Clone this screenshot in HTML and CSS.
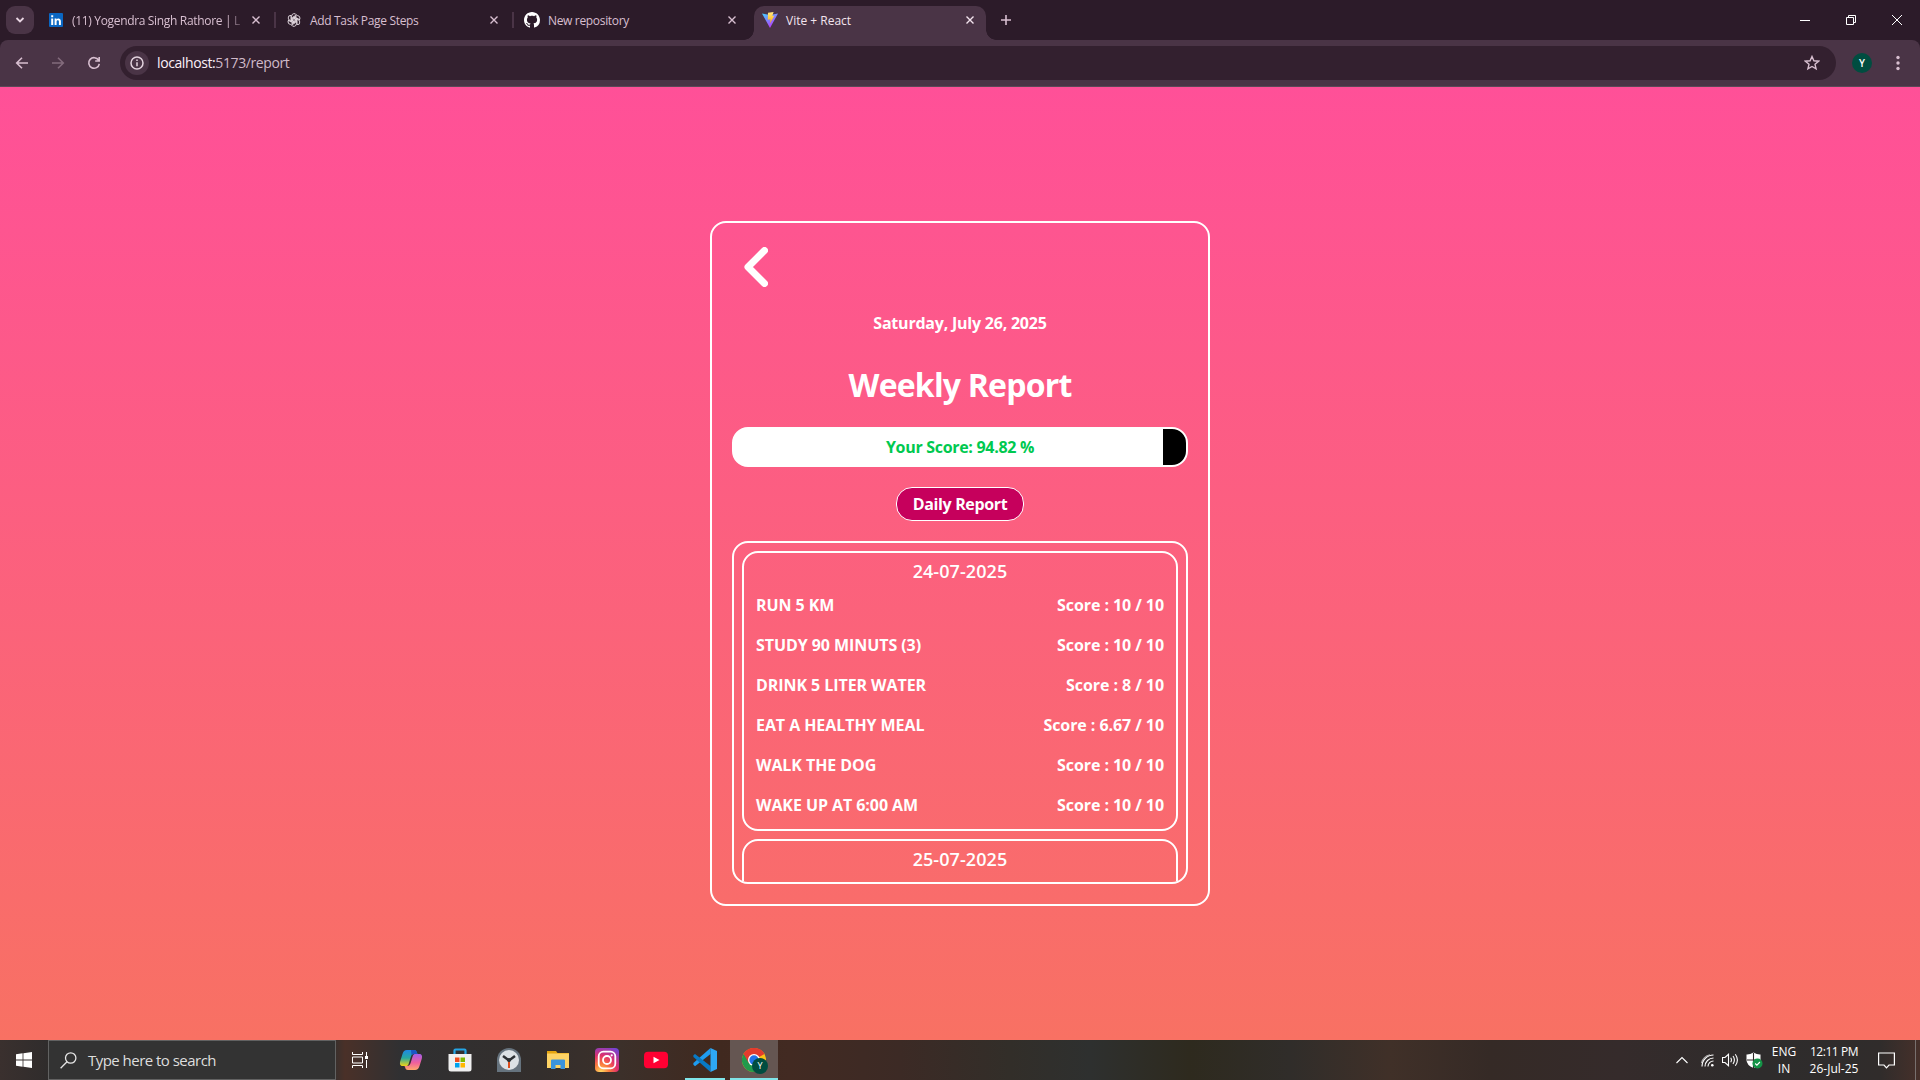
FILE: index.html
```html
<!DOCTYPE html>
<html lang="en">
<head>
<meta charset="utf-8">
<title>Vite + React</title>
<link rel="stylesheet" href="styles.css">
</head>
<body>
<div class="browser">
  <header class="tabstrip">
    <button class="tab-search"><svg width="10" height="8" viewBox="0 0 10 8"><path d="M1.500 2 5 5.500 8.500 2" fill="none" stroke="#e8d5e2" stroke-width="1.800"/></svg></button>
    <div class="tab first">
      <svg class="fav" viewBox="0 0 16 16"><rect x="1" y="1" width="14" height="14" rx="1" fill="#0a66c2"/><path d="M3.200 6.500h2V13h-2zM3.200 3.200h2v2h-2zM6.600 6.500h1.900v1c.9-1.700 4.400-1.700 4.400 1.700V13h-2V9.600c0-2-2.300-1.800-2.300 0V13h-2z" fill="#fff"/></svg>
      <span class="tab-title fade">(11) Yogendra Singh Rathore | L</span>
      <svg class="x" viewBox="0 0 10 10"><path d="M1.500 1.500l7 7M8.500 1.500l-7 7"/></svg>
    </div>
    <div class="tab">
      <svg class="fav" viewBox="0 0 16 16"><g fill="none" stroke="#e6dce3" stroke-width=".9"><path id="petal" d="M5.600 9.400V4.200a2.600 2.600 0 0 1 4.900-1.200L6.800 5.200v4"/><use href="#petal" transform="rotate(60 8 8)"/><use href="#petal" transform="rotate(120 8 8)"/><use href="#petal" transform="rotate(180 8 8)"/><use href="#petal" transform="rotate(240 8 8)"/><use href="#petal" transform="rotate(300 8 8)"/></g></svg>
      <span class="tab-title">Add Task Page Steps</span>
      <svg class="x" viewBox="0 0 10 10"><path d="M1.500 1.500l7 7M8.500 1.500l-7 7"/></svg>
    </div>
    <div class="tab">
      <svg class="fav" viewBox="0 0 16 16"><path fill="#fff" d="M8 0C3.580 0 0 3.580 0 8c0 3.540 2.290 6.530 5.470 7.590.4.070.55-.17.55-.38 0-.19-.01-.82-.01-1.490-2.010.37-2.530-.49-2.690-.94-.09-.23-.48-.94-.82-1.130-.28-.15-.68-.52-.01-.53.63-.01 1.080.58 1.230.82.72 1.210 1.870.87 2.330.66.070-.52.28-.87.51-1.070-1.780-.2-3.640-.89-3.640-3.950 0-.87.31-1.590.82-2.150-.08-.2-.36-1.020.08-2.120 0 0 .67-.21 2.200.82.64-.18 1.320-.27 2-.27s1.360.09 2 .27c1.530-1.040 2.200-.82 2.200-.82.44 1.100.16 1.920.08 2.120.51.56.82 1.270.82 2.150 0 3.070-1.870 3.750-3.650 3.950.29.25.54.73.54 1.480 0 1.070-.01 1.930-.01 2.200 0 .21.15.46.55.38A8 8 0 0 0 16 8c0-4.420-3.580-8-8-8z"/></svg>
      <span class="tab-title">New repository</span>
      <svg class="x" viewBox="0 0 10 10"><path d="M1.500 1.500l7 7M8.500 1.500l-7 7"/></svg>
    </div>
    <div class="tab active">
      <svg class="fav" viewBox="0 0 16 16"><defs><linearGradient id="va" x2=".6" y2="1"><stop stop-color="#41d1ff"/><stop offset="1" stop-color="#bd34fe"/></linearGradient><linearGradient id="vb" x2="0" y2="1"><stop stop-color="#ffea83"/><stop offset="1" stop-color="#ffa800"/></linearGradient></defs><path d="M0 1.600 8 3l8-1.400L8 16z" fill="url(#va)"/><path d="M6 .8 11.600 0 10.300 4l2-.3L8 11.500l.5-4.300-2.700.5z" fill="url(#vb)"/></svg>
      <span class="tab-title">Vite + React</span>
      <svg class="x" viewBox="0 0 10 10"><path d="M1.500 1.500l7 7M8.500 1.500l-7 7"/></svg>
    </div>
    <svg class="plus" viewBox="0 0 10 10"><path d="M5 0v10M0 5h10"/></svg>
    <div class="winctl">
      <svg viewBox="0 0 10 10"><path d="M0 5.500h10"/></svg>
      <svg viewBox="0 0 10 10"><path d="M.5 2.500h7v7h-7zM2.500 2.500v-2h7v7h-2"/></svg>
      <svg viewBox="0 0 10 10"><path d="M0 0l10 10M10 0 0 10"/></svg>
    </div>
  </header>
  <div class="toolbar">
    <svg class="nav" viewBox="0 0 16 16"><path d="M14 8H3M8 2.700 2.700 8 8 13.300"/></svg>
    <svg class="nav off" viewBox="0 0 16 16"><path d="M2 8h11M8 2.700 13.300 8 8 13.300"/></svg>
    <svg class="nav" viewBox="0 0 16 16"><path d="M12.600 5.200a5.300 5.300 0 1 0 .7 3.600M13.200 2v4H9.200"/></svg>
    <div class="omnibox">
      <span class="info"><svg width="14" height="14" viewBox="0 0 14 14"><circle cx="7" cy="7" r="6" fill="none" stroke="#e3d3de" stroke-width="1.500"/><path d="M7 6.200v4M7 3.600v1.500" stroke="#e3d3de" stroke-width="1.500"/></svg></span>
      <span class="url"><b>localhost:</b>5173/report</span>
      <svg class="star" viewBox="0 0 16 16"><path d="M8 1.500l1.900 4.300 4.700.4-3.600 3.100 1.100 4.600L8 11.500l-4.100 2.400L5 9.300 1.400 6.200l4.700-.4z"/></svg>
    </div>
    <span class="avatar">Y</span>
    <svg class="dots" viewBox="0 0 4 16"><circle cx="2" cy="2.500" r="1.700"/><circle cx="2" cy="8" r="1.700"/><circle cx="2" cy="13.500" r="1.700"/></svg>
  </div>
</div>

<main class="page">
  <section class="card">
    <svg class="back" width="24" height="40" viewBox="0 0 24 40"><path d="M20.500 3.500 4 20l16.500 16.500" fill="none" stroke="#fff" stroke-width="7" stroke-linecap="round" stroke-linejoin="round"/></svg>
    <p class="date">Saturday, July 26, 2025</p>
    <h1>Weekly Report</h1>
    <div class="score"><div class="fill" style="width:94.82%"></div><span class="label">Your Score: 94.82 %</span></div>
    <button class="daily">Daily Report</button>
    <div class="list">
      <article class="day">
        <h2>24-07-2025</h2>
        <div class="row"><span>RUN 5 KM</span><span>Score : 10 / 10</span></div>
        <div class="row"><span>STUDY 90 MINUTS (3)</span><span>Score : 10 / 10</span></div>
        <div class="row"><span>DRINK 5 LITER WATER</span><span>Score : 8 / 10</span></div>
        <div class="row"><span>EAT A HEALTHY MEAL</span><span>Score : 6.67 / 10</span></div>
        <div class="row"><span>WALK THE DOG</span><span>Score : 10 / 10</span></div>
        <div class="row"><span>WAKE UP AT 6:00 AM</span><span>Score : 10 / 10</span></div>
      </article>
      <article class="day"><h2>25-07-2025</h2></article>
    </div>
  </section>
</main>

<footer class="taskbar">
  <span class="start"><svg width="16" height="16" viewBox="0 0 16 16"><path fill="#fff" d="M0 2.200 6.600 1.300v6.300H0zM7.400 1.200 16 0v7.600H7.400zM0 8.400h6.600v6.300L0 13.800zM7.400 8.400H16V16l-8.600-1.200z"/></svg></span>
  <div class="search">
    <svg width="17" height="17" viewBox="0 0 17 17" fill="none" stroke="#e6e6e6" stroke-width="1.300"><circle cx="10.700" cy="6" r="5.200"/><path d="M7 9.800.6 16.300"/></svg>
    <span>Type here to search</span>
  </div>
  <span class="taskview"><svg width="17" height="16" viewBox="0 0 17 16" fill="none" stroke="#fff"><path d="M.5 0v2.500h10V0M.5 5h10v6H.5zM.5 16v-2.500h10V16M14.500 0v4M14.500 8v8"/><path d="M13 4h3v3h-3z" fill="#fff" stroke="none"/></svg></span>
  <div class="apps">
    <span class="app"><svg width="24" height="24" viewBox="0 0 24 24"><defs><linearGradient id="ca" x2="0" y2="1"><stop stop-color="#1e88e5"/><stop offset=".5" stop-color="#27a9a0"/><stop offset="1" stop-color="#f2d416"/></linearGradient><linearGradient id="cb" x2="0" y2="1"><stop stop-color="#a45de8"/><stop offset=".55" stop-color="#f0609c"/><stop offset="1" stop-color="#ffa76b"/></linearGradient></defs><path d="M8 2h7c2 0 2.500 1 3 3l.6 1H15c-2 0-2.600 1-3.200 3l-2 6.500C9.200 17.400 8.500 18 7 18H4c-3 0-3.500-2-2.700-5l2.200-7C4.300 3.300 5.500 2 8 2z" fill="url(#ca)"/><path d="M16 22H9c-2 0-2.500-1-3-3l-.6-1H8c2 0 3-1 3.600-3l2-6.500C14.200 6.600 15 6 16.500 6H20c3 0 3.500 2 2.700 5l-2.200 7c-.8 2.700-2 4-4.500 4z" fill="url(#cb)"/><path d="M12 2h3c2 0 2.500 1 3 3l.6 1H15c-1.400 0-2 .5-2.500 1.500z" fill="#1956c4"/></svg></span>
    <span class="app"><svg width="24" height="24" viewBox="0 0 24 24"><path d="M6.500 7V2.500q0-1 1-1h9q1 0 1 1V7" fill="none" stroke="#25a5e5" stroke-width="2.200"/><path d="M.5 6h23v15q0 2.500-2.500 2.500H3Q.5 23.500.5 21z" fill="#f0f0f0"/><path d="M7 9.500h4.500V14H7z" fill="#f04e1f"/><path d="M12.500 9.500H17V14h-4.500z" fill="#7fba00"/><path d="M7 15h4.500v4.500H7z" fill="#00a3ee"/><path d="M12.500 15H17v4.500h-4.500z" fill="#ffb900"/></svg></span>
    <span class="app"><svg width="24" height="24" viewBox="0 0 24 24"><path d="M0 24V12a12 12 0 0 1 24 0v12z" fill="#66737e"/><circle cx="12" cy="12" r="10" fill="#dce1e5"/><path d="M12 12v8" stroke="#dc4d1c" stroke-width="2"/><path d="M6 8l6 4.500L18 8" fill="none" stroke="#2c3034" stroke-width="2.500"/><circle cx="12" cy="12" r="2" fill="#2c3034"/></svg></span>
    <span class="app"><svg width="24" height="24" viewBox="0 0 24 24"><path d="M1 3h9l1.500 2H23v4H1z" fill="#e5a50f"/><path d="M1 5.500h22V20H1z" fill="#fdd365"/><path d="M5 21v-8.500q0-1 1-1h12q1 0 1 1V21h-4.500v-4h-5v4z" fill="#3b94dc"/></svg></span>
    <span class="app"><svg width="24" height="24" viewBox="0 0 24 24"><defs><radialGradient id="ig" cx=".25" cy="1" r="1.150"><stop stop-color="#ffdb61"/><stop offset=".3" stop-color="#fb793c"/><stop offset=".6" stop-color="#e1306c"/><stop offset="1" stop-color="#7143d6"/></radialGradient></defs><rect width="24" height="24" rx="4" fill="url(#ig)"/><g fill="none" stroke="#fff" stroke-width="1.800"><rect x="3.700" y="3.700" width="16.600" height="16.600" rx="4.600"/><circle cx="12" cy="12" r="4"/></g><circle cx="16.700" cy="7.300" r="1.100" fill="#fff"/></svg></span>
    <span class="app"><svg width="24" height="24" viewBox="0 0 24 24"><rect y="3.700" width="24" height="16.600" rx="4" fill="#ff0033"/><path d="M9.500 8.700v6.600l6-3.300z" fill="#fff"/></svg></span>
    <span class="app open"><svg width="24" height="24" viewBox="0 0 24 24"><path d="M17.500 6 2 18.200l-1.600-1.500V15L17.500 0z" fill="#1f9cf0" /><path d="M.4 7.300 2 6l15.500 12v6L.4 9z" fill="#0879c4"/><path d="M17.500 0 24 3v18l-6.500 3z" fill="#2ea8f5"/></svg></span>
    <span class="app current"><svg width="27" height="27" viewBox="0 0 27 27"><circle cx="12" cy="12" r="12" fill="#fbc116"/><path d="M12 12 1.600 6A12 12 0 0 1 22.400 6z" fill="#e33b2e"/><path d="M1.600 6A12 12 0 0 0 12 24l5.200-9-5.200-3z" fill="#219a4c"/><path d="M12 6h10.400A12 12 0 0 0 1.600 6l5.200 9z" fill="#e33b2e"/><circle cx="12" cy="12" r="6" fill="#fff"/><circle cx="12" cy="12" r="4.700" fill="#2472e8"/><circle cx="18" cy="18" r="8" fill="#004d40"/><text x="18" y="21.300" text-anchor="middle" font-size="9" fill="#fff">Y</text></svg></span>
  </div>
  <div class="tray">
    <svg width="12" height="8" viewBox="0 0 12 8"><path d="M.5 7 6 1.500 11.500 7"/></svg>
    <svg class="wifi" width="13" height="13" viewBox="0 0 13 13"><path d="M1 12.500A11.500 11.500 0 0 1 12.500 1M4 12.500A8.500 8.500 0 0 1 12.500 4M7 12.500A5.500 5.500 0 0 1 12.500 7" /><path d="M.5 9A11 11 0 0 1 9 .7" opacity=".6"/><circle cx="11.300" cy="11.300" r="1.300" fill="#fff" stroke="none"/></svg>
    <svg class="speaker" width="17" height="14" viewBox="0 0 17 14"><path d="M.5 4.500h2.500l3.500-3.200v11.400L3 9.500H.5zM8.700 4.800q1.500 2.200 0 4.400M11 3q2.800 4 0 8M13.300 1.200q4.200 5.800 0 11.600"/></svg>
    <svg class="shield" width="17" height="17" viewBox="0 0 17 17"><path d="M7.500.5Q11 2.700 14.500 2.500V8q0 5-7 8-7-3-7-8V2.500Q4 2.700 7.500.5z" fill="#fff" stroke="none"/><path d="M7.500 1v15M1 8h13" stroke="#2e2927"/><circle cx="11.500" cy="11.500" r="5" fill="#149447" stroke="none"/><path d="M9.200 11.500l1.700 1.700 3-3.200"/></svg>
    <div class="lang"><span>ENG</span><span>IN</span></div>
    <div class="clock"><span class="time">12:11 PM</span><span>26-Jul-25</span></div>
    <svg class="note" width="17" height="17" viewBox="0 0 17 17"><path d="M.6 1h15.800v12H11l-2.500 2.800L6 13H.6z" stroke-width="1.200"/></svg>
    <i class="peek"></i>
  </div>
</footer>
</body>
</html>
```
FILE: styles.css
```css
* { box-sizing: border-box; margin: 0; }

body {
  width: 1920px;
  height: 1080px;
  overflow: hidden;
  display: grid;
  grid-template-rows: 87px 953px 40px;
  font-family: "Open Sans", "Noto Sans", sans-serif;
  color: #fff;
}

button { font: inherit; color: inherit; border: 0; padding: 0; }
svg { display: block; flex: none; }

/* Browser chrome */
.browser { background: #2c1b29; }

.tabstrip {
  height: 40px;
  display: flex;
  align-items: center;
  padding-left: 6px;
  font-size: 12px;
  letter-spacing: -0.33px;
  color: #d8bfd0;
}
.tab-search {
  width: 28px;
  height: 28px;
  border-radius: 9px;
  background: #4a3446;
  display: grid;
  place-items: center;
}
.tab {
  width: 238px;
  height: 34px;
  display: flex;
  align-items: center;
  padding: 0 15px 0 10px;
}
.tab.first { margin-left: 4px; }
.tab + .tab:not(.active) {
  background: linear-gradient(#4a3446, #4a3446) -2px center / 2px 16px no-repeat;
  background-position: 0 center;
  margin-left: -2px;
  padding-left: 12px;
  width: 240px;
}
.tab-title {
  flex: 1;
  margin: 1px 9px 0 8px;
  white-space: nowrap;
}
.fade {
  -webkit-mask: linear-gradient(90deg, #000 155px, transparent 173px);
  mask: linear-gradient(90deg, #000 155px, transparent 173px);
}
.tab.active {
  position: relative;
  width: 232px;
  margin: 6px 0 0 2px;
  padding: 0 11px 6px 8px;
  border-radius: 10px 10px 0 0;
  background: #4a3446;
  color: #f3e4ee;
  letter-spacing: 0;
}
.tab.active::before,
.tab.active::after {
  content: "";
  position: absolute;
  bottom: 0;
  width: 10px;
  height: 10px;
}
.tab.active::before { left: -10px; background: radial-gradient(circle at 0 0, transparent 9.5px, #4a3446 10px); }
.tab.active::after { right: -10px; background: radial-gradient(circle at 100% 0, transparent 9.5px, #4a3446 10px); }
.fav { width: 16px; height: 16px; }
.x { width: 10px; height: 10px; fill: none; stroke: #d8bfd0; stroke-width: 1.4; }
.active .x { stroke: #f3e4ee; }
.plus { width: 10px; height: 10px; margin-left: 15px; stroke: #d8bfd0; stroke-width: 1.6; }
.winctl { display: flex; gap: 36px; margin: 0 18px 0 auto; }
.winctl svg { width: 10px; height: 10px; fill: none; stroke: #fff; }

.toolbar {
  height: 47px;
  display: flex;
  align-items: center;
  padding: 0 20px 1px 14px;
  background: #4a3446;
  border-bottom: 1px solid #5b4857;
  border-radius: 8px 8px 0 0;
}
.nav { width: 16px; height: 16px; margin-right: 20px; fill: none; stroke: #d8bfd0; stroke-width: 1.6; }
.nav.off { stroke: #836b7c; }
.omnibox {
  width: 1716px;
  height: 34px;
  margin: 1px 0 0 -2px;
  padding: 0 16px 0 5px;
  display: flex;
  align-items: center;
  border-radius: 17px;
  background: #33202f;
}
.info { width: 24px; height: 24px; border-radius: 50%; background: #4a3446; display: grid; place-items: center; }
.url { flex: 1; margin: -1px 0 0 8px; font-size: 14px; letter-spacing: -0.4px; color: #d0bac9; }
.url b { font-weight: 400; color: #fbf0f8; }
.star { width: 16px; height: 16px; fill: none; stroke: #d8bfd0; stroke-width: 1.4; }
.avatar {
  width: 20px;
  height: 20px;
  margin-left: 16px;
  border-radius: 50%;
  background: #004d40;
  font-size: 10px;
  font-weight: 600;
  line-height: 20px;
  text-align: center;
}
.dots { width: 4px; height: 16px; margin-left: auto; fill: #d8bfd0; }

/* Report page */
.page {
  display: flex;
  justify-content: center;
  align-items: flex-start;
  padding-top: 134px;
  background: linear-gradient(#ff5098, #f87163);
}
.card {
  width: 500px;
  height: 685px;
  padding: 20px;
  display: flex;
  flex-direction: column;
  align-items: center;
  border: 2px solid #fff;
  border-radius: 16px;
  font-size: 16px;
  font-weight: 700;
}
.back { align-self: flex-start; margin: 4px 0 0 12px; }
.date { margin-top: 24px; line-height: 24px; letter-spacing: -0.22px; }
h1 { margin-top: 30px; font-size: 32px; line-height: 40px; letter-spacing: -0.8px; }
.score {
  position: relative;
  flex: none;
  width: 100%;
  height: 40px;
  margin-top: 22px;
  overflow: hidden;
  border: 2px solid #fff;
  border-radius: 16px;
  background: linear-gradient(90deg, #fff 50%, #000 50%);
}
.fill { height: 100%; background: #fff; }
.label {
  position: absolute;
  inset: 0;
  line-height: 36px;
  text-align: center;
  letter-spacing: -0.3px;
  color: #00c950;
}
.daily {
  flex: none;
  width: 128px;
  height: 34px;
  margin-top: 20px;
  border: 1px solid #fff;
  border-radius: 16px;
  background: #c6005c;
  letter-spacing: -0.35px;
}
.list {
  width: 100%;
  height: 343px;
  margin-top: 20px;
  padding: 8px;
  overflow: hidden;
  border: 2px solid #fff;
  border-radius: 16px;
}
.day {
  height: 280px;
  margin-bottom: 8px;
  padding: 4px 12px;
  border: 2px solid #fff;
  border-radius: 16px;
}
h2 { font-size: 18px; font-weight: 600; line-height: 28px; letter-spacing: 0.08px; text-align: center; }
.row { height: 40px; display: flex; justify-content: space-between; line-height: 40px; letter-spacing: -0.07px; }

/* Taskbar */
.taskbar {
  display: flex;
  align-items: stretch;
  background: linear-gradient(90deg, #3a302e 0, #2f2c2c 50px, #303030 330px, #4a3028 345px, #303032 400px, #332e2c 540px, #3c302a 620px, #40291f 720px, #422a22 790px, #3c2a25 900px, #322e29 1010px, #2e302f 1090px, #2e2a1e 1190px, #302d2a 1290px, #403028 1390px, #352a26 1490px, #352b2b 1620px, #2e2c2c 1760px, #302c2b 1880px, #46302a 1920px);
}
.start, .taskview { width: 48px; display: grid; place-items: center; }
.search {
  width: 288px;
  height: 40px;
  display: flex;
  align-items: center;
  gap: 11px;
  padding-left: 11px;
  border: 1px solid #626262;
  background: #333;
  font-size: 15px;
  letter-spacing: -0.53px;
  color: #dedede;
}
.apps { display: flex; gap: 1px; margin-left: 3px; }
.app { width: 48px; display: grid; place-items: center; }
.open { background: linear-gradient(#80e5e9, #80e5e9) center bottom / 40px 2px no-repeat; }
.current { background: #655652; border-bottom: 2px solid #80e5e9; padding: 4px 0 0 2px; }
.tray { display: flex; align-items: center; margin-left: auto; font-size: 12px; line-height: 17px; text-align: center; }
.tray svg { fill: none; stroke: #fff; stroke-width: 1.1; }
.wifi { margin-left: 13px; }
.speaker { margin-left: 8px; }
.shield { margin-left: 7px; }
.lang { width: 28px; margin-left: 7px; display: grid; }
.clock { width: 60px; margin-left: 6px; display: grid; }
.time { letter-spacing: -0.45px; }
.note { margin-left: 14px; }
.peek { width: 1px; height: 40px; margin: 0 4px 0 20px; background: #78706e; }
```
